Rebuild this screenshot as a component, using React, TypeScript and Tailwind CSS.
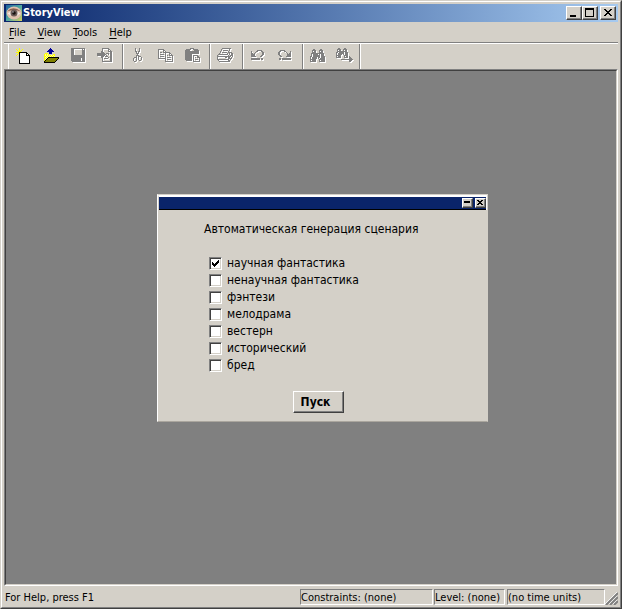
import { useState } from "react";
import type { ReactNode } from "react";

const palette: Record<string, string> = {
  k: "#000000",
  w: "#ffffff",
  y: "#ffff00",
  l: "#ffff99",
  o: "#808000",
  b: "#000099",
  g: "#808080",
};

const icons = {
  new: [
    "...y.............",
    "y..y..y..........",
    ".y.y.y...........",
    "..yyy............",
    "yyykkkkkkkk......",
    "..ykwwwwwwkk.....",
    ".y.kwwwwwwkwk....",
    "y..kwwwwwwkkkk...",
    "...kwwwwwwwwwk...",
    "...kwwwwwwwwwk...",
    "...kwwwwwwwwwk...",
    "...kwwwwwwwwwk...",
    "...kwwwwwwwwwk...",
    "...kwwwwwwwwwk...",
    "...kwwwwwwwwwk...",
    "...kkkkkkkkkkk...",
  ],
  open: [
    "......b........",
    ".....bbb.......",
    "....bbbbb......",
    "...bbbbbbb.....",
    ".....bbb.......",
    ".yyy.bbb.......",
    "ylyly....yy....",
    "ylylylylyly....",
    "yylylylylyl....",
    "ylylkkkkkkkkkkk",
    "yylkooooooooook",
    "ylkooooooooook.",
    "ykooooooooook..",
    "kooooooooook...",
    "kkkkkkkkkkk....",
  ],
  save: [
    "gggggggggggggg",
    "ggg........g.g",
    "ggg........ggg",
    "ggg........ggg",
    "ggg........ggg",
    "ggg........ggg",
    "ggg........ggg",
    "gggggggggggggg",
    "gggggggggggggg",
    "gggggggggggggg",
    "gggggggggg.ggg",
    "gggggggggg.ggg",
    "gggggggggg.ggg",
    ".ggggggggggggg",
  ],
  import: [
    ".....ggggggg.....",
    ".....g.....gg....",
    ".....g.....g.g...",
    "....gg.....gggg..",
    "....ggg......gg..",
    "gggggggg.ggg.gg..",
    "ggggggggg..g.gg..",
    "gggggggg.g...gg..",
    "....ggg.ggg..gg..",
    "....gg.....g.gg..",
    ".....g.gggg..gg..",
    ".....g.......gg..",
    ".....g.......gg..",
    ".....gggggggggg..",
  ],
  cut: [
    "..g...g...",
    "..g...g...",
    "..g...g...",
    "..gg.gg...",
    "...g.g....",
    "...ggg....",
    "....g.....",
    "...ggg....",
    "...g.ggg..",
    ".ggg.g..g.",
    "g..g.g..g.",
    "g..g.g..g.",
    "g..g..gg..",
    ".gg.......",
  ],
  copy: [
    "gggggg.........",
    "g....gg........",
    "g....g.g.......",
    "g.gg.ggggggg...",
    "g......g...gg..",
    "g.gggg.g...g.g.",
    "g......g.g.gggg",
    "g.gggg.g......g",
    "g......g.gggg.g",
    "gggggggg......g",
    ".......g.gggg.g",
    ".......g......g",
    ".......gggggggg",
  ],
  paste: [
    ".....gggg......",
    ".ggggg..ggggg..",
    "ggggg....ggggg.",
    "gggggggggggggg.",
    "gggggggggggggg.",
    "gggggggggggggg.",
    "ggggggg........",
    "ggggggg.ggggg..",
    "ggggggg.g...gg.",
    "ggggggg.g.g.ggg",
    "ggggggg.g.....g",
    "ggggggg.g.ggg.g",
    ".gggggg.g.....g",
    "........ggggggg",
  ],
  print: [
    ".....ggggggggg..",
    "....g.......g...",
    "....g.ggggg.g...",
    "...g.......g....",
    "...g.ggggg.gggg.",
    "..g.......g.g.gg",
    ".gggggggggg.g.gg",
    "g..........g.ggg",
    "gggggggggggggg.g",
    "g.......gg.gg.g.",
    "g..........gggg.",
    "gggggggggggg.g..",
    ".g.........gg...",
    "..ggggggggggg...",
  ],
  undo: [
    "......ggggg...",
    "g....gg...gg..",
    "g...g......gg.",
    "gg.g.......gg.",
    "gggg.......gg.",
    "gggg......gg..",
    "ggggg....gg...",
    "..............",
    "ggggggggg.gg..",
    "ggggggggg.gg..",
  ],
  redo: [
    "..ggggg.......",
    ".gg...gg....g.",
    "gg......g...g.",
    "gg.......g.gg.",
    "gg.......gggg.",
    ".gg......gggg.",
    "..gg....ggggg.",
    "..............",
    ".gg.ggggggggg.",
    ".gg.ggggggggg.",
  ],
  find: [
    "...gg.....gg....",
    "..gggg...gggg...",
    "..g.gg...g.gg...",
    "..gggg...gggg...",
    ".ggggggggggggg..",
    ".g.ggggg.g.ggg..",
    ".g.ggggggg.ggg..",
    "gg.ggggggg.gggg.",
    "g.ggggg.gg.gggg.",
    "g.ggggg.g.ggggg.",
    "gggggg...gggggg.",
    "g.gggg...g.gggg.",
    "gggggg...gggggg.",
  ],
  findNext: [
    "..gg....gg.........",
    ".gggg..gggg........",
    ".g.gg..g.gg........",
    ".gggggggggg........",
    "gg.ggggg.ggg.......",
    "g.gggggg.ggg.......",
    "g.gggg.g.ggg.......",
    "ggggg...gggg.......",
    "g.ggg...g.gg.g.....",
    "ggggg...gggg.gg....",
    ".............ggg...",
    ".....gggggggggggg..",
    ".............ggg...",
    ".............gg....",
  ],
  minimize: ["........", "........", "........", "........", "........", "........", "kkkkkk..", "kkkkkk.."],
  maximize: [
    "kkkkkkkkk",
    "kkkkkkkkk",
    "k.......k",
    "k.......k",
    "k.......k",
    "k.......k",
    "k.......k",
    "k.......k",
    "kkkkkkkkk",
  ],
  close: ["kk....kk", ".kk..kk.", "..kkkk..", "...kk...", "..kkkk..", ".kk..kk.", "kk....kk"],
  smallMinimize: ["kkkkkk", "kkkkkk", "......", "......"],
  smallClose: ["kk..kk", ".kkkk.", "..kk..", ".kkkk.", "kk..kk"],
  check: ["......k", ".....kk", "k...kkk", "kk.kkk.", "kkkkk..", ".kkk...", "..k...."],
};

type IconName = keyof typeof icons;

const PixelIcon = ({ name, embossed = false }: { name: IconName; embossed?: boolean }) => {
  const rows = icons[name];
  const width = rows[0].length + (embossed ? 1 : 0);
  const height = rows.length + (embossed ? 1 : 0);

  const draw = (offset: number, color?: string) =>
    rows.flatMap((row, y) =>
      [...row].map((cell, x) =>
        cell === "." ? null : (
          <rect
            key={`${offset}-${x}-${y}`}
            x={x + offset}
            y={y + offset}
            width="1"
            height="1"
            fill={color ?? palette[cell]}
          />
        ),
      ),
    );

  return (
    <svg
      width={width}
      height={height}
      viewBox={`0 0 ${width} ${height}`}
      shapeRendering="crispEdges"
      aria-hidden="true"
      className="shrink-0"
    >
      {embossed && draw(1, "#ffffff")}
      {draw(0)}
    </svg>
  );
};

const EyeLogo = () => (
  <svg width="16" height="16" viewBox="0 0 16 16" aria-hidden="true" className="shrink-0">
    <defs>
      <linearGradient id="sky" x1="0" y1="0" x2="1" y2="1">
        <stop offset="0" stopColor="#1c5f9e" />
        <stop offset="0.5" stopColor="#4fa8a0" />
        <stop offset="1" stopColor="#d8cf5c" />
      </linearGradient>
    </defs>
    <rect width="16" height="16" fill="url(#sky)" />
    <ellipse cx="8" cy="8" rx="7.5" ry="6.5" fill="#e0c0ae" />
    <path d="M1 6.500Q7 0 15 6.500Q8 3.500 1 6.500Z" fill="#8b6252" />
    <path d="M1.500 8.500Q8 3 14.500 8.500Q8 13.500 1.500 8.500Z" fill="#f1e9e4" />
    <circle cx="8" cy="8" r="3.5" fill="#6b5b58" />
    <circle cx="8" cy="8" r="1.8" fill="#17110f" />
    <circle cx="7" cy="7" r="0.7" fill="#c9c9d6" />
  </svg>
);

const raised =
  "border border-t-white border-l-white border-r-[#404040] border-b-[#404040] bg-[#d4d0c8] shadow-[inset_-1px_-1px_0_#808080]";

const CaptionButton = ({ name, label }: { name: IconName; label: string }) => (
  <button
    type="button"
    aria-label={label}
    className={`flex h-3.5 w-4 items-center justify-center pr-px pb-px ${raised}`}
  >
    <PixelIcon name={name} />
  </button>
);

const ToolButton = ({ name, label, disabled }: { name: IconName; label: string; disabled?: boolean }) => (
  <button
    type="button"
    aria-label={label}
    disabled={disabled}
    className="flex h-6 w-[27px] shrink-0 items-center justify-center pb-0.5"
  >
    <PixelIcon name={name} embossed={disabled} />
  </button>
);

const Separator = () => (
  <div className="w-1.5 shrink-0 self-stretch px-0.5">
    <div className="ml-px h-full w-0.5 border-r border-l border-r-white border-l-[#808080]" />
  </div>
);

const StatusPane = ({ className, children }: { className: string; children: ReactNode }) => (
  <div
    className={`truncate border border-t-[#808080] border-l-[#808080] border-r-white border-b-white leading-4 ${className}`}
  >
    {children}
  </div>
);

const menus = ["File", "View", "Tools", "Help"];

const genres = [
  "научная фантастика",
  "ненаучная фантастика",
  "фэнтези",
  "мелодрама",
  "вестерн",
  "исторический",
  "бред",
];

const GeneratorDialog = () => {
  const [selected, setSelected] = useState<string[]>([genres[0]]);

  const toggle = (genre: string) =>
    setSelected((current) =>
      current.includes(genre) ? current.filter((item) => item !== genre) : [...current, genre],
    );

  return (
    <section
      aria-label="Автоматическая генерация сценария"
      className="absolute top-[123px] left-[151px] w-[331px] border border-t-[#d4d0c8] border-l-white border-r-[#d4d0c8] border-b-[#aaa69e] bg-[#d4d0c8] text-xs"
    >
      <div className="border-t-2 border-r border-l border-t-white border-l-[#d4d0c8] border-r-white">
        <div className="flex h-[13px] justify-end gap-0.5 border-b border-black bg-[#0a246a] pt-px">
          <button
            type="button"
            aria-label="Свернуть"
            className={`flex h-2.5 w-[11px] items-center justify-center pr-px ${raised}`}
          >
            <PixelIcon name="smallMinimize" />
          </button>
          <button
            type="button"
            aria-label="Закрыть"
            className={`flex h-2.5 w-[11px] items-center justify-center pr-px pb-px ${raised}`}
          >
            <PixelIcon name="smallClose" />
          </button>
        </div>
      </div>

      <div className="px-[46px] pt-[11px] pb-2">
        <h1 className="leading-4">Автоматическая генерация сценария</h1>
        <ul className="mt-[18px] pl-[5px]">
          {genres.map((genre) => (
            <li key={genre}>
              <label className="flex h-[17px] items-center gap-[5px] leading-[17px]">
                <span className="relative flex">
                  <input
                    type="checkbox"
                    checked={selected.includes(genre)}
                    onChange={() => toggle(genre)}
                    className="peer size-[13px] appearance-none border border-t-[#808080] border-l-[#808080] border-r-white border-b-white bg-white shadow-[inset_1px_1px_0_#404040,inset_-1px_-1px_0_#d4d0c8]"
                  />
                  <span className="pointer-events-none absolute inset-0 hidden items-center justify-center peer-checked:flex">
                    <PixelIcon name="check" />
                  </span>
                </span>
                {genre}
              </label>
            </li>
          ))}
        </ul>
        <button
          type="button"
          className={`mt-[17px] ml-[89px] h-[22px] w-[51px] pr-1.5 text-center leading-4 font-bold ${raised}`}
        >
          Пуск
        </button>
      </div>
    </section>
  );
};

const App = () => {
  return (
    <div className="flex min-h-screen flex-col border border-t-[#d4d0c8] border-l-[#d4d0c8] border-r-[#404040] border-b-[#404040] bg-[#d4d0c8] font-['DejaVu_Sans_Condensed','DejaVu_Sans',sans-serif] text-[11px] text-black">
      <div className="flex flex-1 flex-col border border-t-white border-l-white border-r-[#808080] border-b-[#808080] p-0.5">
        <header className="flex h-[18px] items-center bg-linear-to-r from-[#0a246a] to-[#a6caf0] px-0.5">
          <EyeLogo />
          <span className="ml-px flex-1 leading-[18px] font-bold text-white">StoryView</span>
          <CaptionButton name="minimize" label="Minimize" />
          <CaptionButton name="maximize" label="Maximize" />
          <div className="ml-0.5 flex">
            <CaptionButton name="close" label="Close" />
          </div>
        </header>

        <nav className="flex h-[21px] items-center border-b border-[#808080] pt-0.5">
          {menus.map((menu) => (
            <button key={menu} type="button" className="px-1.5 leading-4 first:pl-[5px]">
              <span className="underline underline-offset-2">{menu[0]}</span>
              {menu.slice(1)}
            </button>
          ))}
        </nav>

        <div className="flex h-[26px] items-center border-t border-white pl-1">
          <div className="mr-0.5 w-px self-stretch bg-white" />
          <ToolButton name="new" label="New" />
          <ToolButton name="open" label="Open" />
          <ToolButton name="save" label="Save" disabled />
          <ToolButton name="import" label="Import" disabled />
          <Separator />
          <ToolButton name="cut" label="Cut" disabled />
          <ToolButton name="copy" label="Copy" disabled />
          <ToolButton name="paste" label="Paste" disabled />
          <Separator />
          <ToolButton name="print" label="Print" disabled />
          <Separator />
          <ToolButton name="undo" label="Undo" disabled />
          <ToolButton name="redo" label="Redo" disabled />
          <Separator />
          <ToolButton name="find" label="Find" disabled />
          <ToolButton name="findNext" label="Find next" disabled />
          <div className="w-0.5 self-stretch border-r border-l border-r-white border-l-[#808080]" />
        </div>

        <main className="flex flex-1 flex-col border border-t-[#808080] border-l-[#808080] border-r-white border-b-white">
          <div className="relative flex-1 border border-t-[#404040] border-l-[#404040] border-r-[#d4d0c8] border-b-[#d4d0c8] bg-[#808080]">
            <GeneratorDialog />
          </div>
        </main>

        <footer className="flex h-[19px] pt-[3px]">
          <p className="flex-1 pl-px leading-[18px]">For Help, press F1</p>
          <StatusPane className="mr-px h-4 w-[133px]">Constraints: (none)</StatusPane>
          <StatusPane className="mr-0.5 h-4 w-[71px]">Level: (none)</StatusPane>
          <StatusPane className="h-4 w-[98px]">(no time units)</StatusPane>
          <svg width="13" height="16" viewBox="0 0 13 16" aria-hidden="true">
            <path d="M0 15L12 3M4 15L12 7M8 15L12 11" stroke="#ffffff" />
            <path d="M1 16L13 4M5 16L13 8M9 16L13 12" stroke="#808080" strokeWidth="2" />
          </svg>
        </footer>
      </div>
    </div>
  );
};

export default App;
